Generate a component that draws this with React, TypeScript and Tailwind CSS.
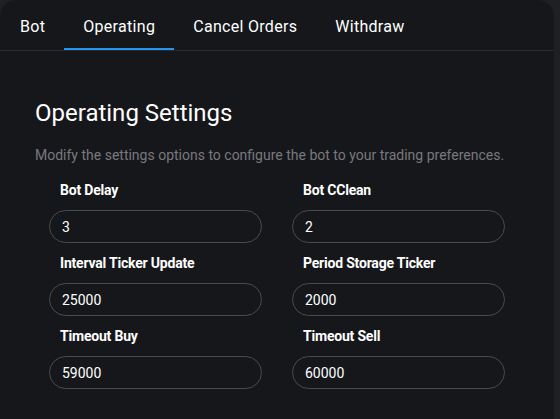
import { useState } from "react";

const tabs = ["Bot", "Operating", "Cancel Orders", "Withdraw"];

const fields = [
  { label: "Bot Delay", value: "3" },
  { label: "Bot CClean", value: "2" },
  { label: "Interval Ticker Update", value: "25000" },
  { label: "Period Storage Ticker", value: "2000" },
  { label: "Timeout Buy", value: "59000" },
  { label: "Timeout Sell", value: "60000" },
];

const Field = ({ label, value }: { label: string; value: string }) => {
  const [val, setVal] = useState(value);
  return (
    <div className="flex flex-col">
      <label className="pl-[11px] text-[14px] font-bold leading-[20px] text-white tracking-[-0.2px]">
        {label}
      </label>
      <input
        value={val}
        onChange={(e) => setVal(e.target.value)}
        className="mt-[10px] h-[33px] w-full rounded-full border border-[#4a4b4f] bg-transparent px-[12px] text-[14px] text-white outline-none"
      />
    </div>
  );
};

export default function App() {
  const [active, setActive] = useState("Operating");
  return (
    <div
      className="h-[419px] w-[560px] bg-[#1f2024]"
      style={{ fontFamily: "Roboto, 'Liberation Sans', sans-serif" }}
    >
      <div className="h-[432px] w-[554px] rounded-[16px] bg-[#16171b]">
        <div className="flex border-b border-[#2a2b2f] pl-[1px]">
          {tabs.map((t) => (
            <button
              key={t}
              onClick={() => setActive(t)}
              className={
                "h-[50px] px-[19px] text-[16px] tracking-[0.3px] text-white " +
                (active === t
                  ? "border-b-2 border-[#2196f3] pt-[6px]"
                  : "pt-[4px]")
              }
            >
              {t}
            </button>
          ))}
        </div>
        <div className="px-[35px] pt-[48px]">
          <h2 className="text-[24px] leading-[28px] text-white">
            Operating Settings
          </h2>
          <p className="mt-[18px] text-[14px] text-[#78797d]">
            Modify the settings options to configure the bot to your trading
            preferences.
          </p>
          <div className="mt-[14px] grid grid-cols-2 gap-x-[30px] gap-y-[10px] pl-[14px] pr-[14px]">
            {fields.map((f) => (
              <Field key={f.label} label={f.label} value={f.value} />
            ))}
          </div>
        </div>
      </div>
    </div>
  );
}
